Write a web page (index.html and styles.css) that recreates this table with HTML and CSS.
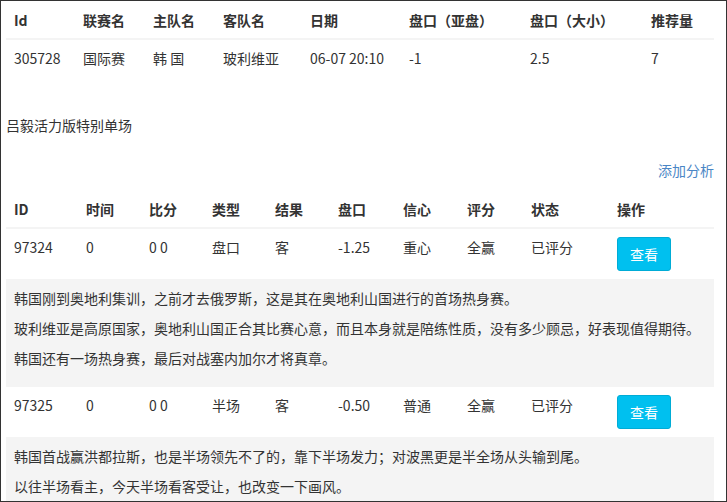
FILE: index.html
```html
<!DOCTYPE html>
<html lang="zh-CN">
<head>
    <meta charset="UTF-8">
    <meta name="viewport" content="width=device-width, initial-scale=1.0">
    <title>单场分析</title>
    <link rel="stylesheet" href="styles.css">
</head>
<body>
    <div class="wrapper">
        <table class="table match-table">
            <colgroup>
                <col style="width: 69px">
                <col style="width: 70px">
                <col style="width: 70px">
                <col style="width: 87px">
                <col style="width: 99px">
                <col style="width: 121px">
                <col style="width: 121px">
                <col>
            </colgroup>
            <thead>
                <tr>
                    <th>Id</th>
                    <th>联赛名</th>
                    <th>主队名</th>
                    <th>客队名</th>
                    <th>日期</th>
                    <th>盘口（亚盘）</th>
                    <th>盘口（大小）</th>
                    <th>推荐量</th>
                </tr>
            </thead>
            <tbody>
                <tr>
                    <td>305728</td>
                    <td>国际赛</td>
                    <td>韩 国</td>
                    <td>玻利维亚</td>
                    <td>06-07 20:10</td>
                    <td>-1</td>
                    <td>2.5</td>
                    <td>7</td>
                </tr>
            </tbody>
        </table>

        <p class="title">吕毅活力版特别单场</p>
        <div class="actions">
            <a href="#" class="add-link">添加分析</a>
        </div>

        <table class="table analysis-table">
            <colgroup>
                <col style="width: 72px">
                <col style="width: 63px">
                <col style="width: 63px">
                <col style="width: 63px">
                <col style="width: 63px">
                <col style="width: 65px">
                <col style="width: 64px">
                <col style="width: 64px">
                <col style="width: 86px">
                <col>
            </colgroup>
            <thead>
                <tr>
                    <th>ID</th>
                    <th>时间</th>
                    <th>比分</th>
                    <th>类型</th>
                    <th>结果</th>
                    <th>盘口</th>
                    <th>信心</th>
                    <th>评分</th>
                    <th>状态</th>
                    <th>操作</th>
                </tr>
            </thead>
            <tbody>
                <tr>
                    <td>97324</td>
                    <td>0</td>
                    <td>0 0</td>
                    <td>盘口</td>
                    <td>客</td>
                    <td>-1.25</td>
                    <td>重心</td>
                    <td>全赢</td>
                    <td>已评分</td>
                    <td><button type="button" class="btn-info">查看</button></td>
                </tr>
                <tr class="note-row">
                    <td colspan="10">
                        <p>韩国刚到奥地利集训，之前才去俄罗斯，这是其在奥地利山国进行的首场热身赛。</p>
                        <p>玻利维亚是高原国家，奥地利山国正合其比赛心意，而且本身就是陪练性质，没有多少顾忌，好表现值得期待。</p>
                        <p>韩国还有一场热身赛，最后对战塞内加尔才将真章。</p>
                    </td>
                </tr>
                <tr>
                    <td>97325</td>
                    <td>0</td>
                    <td>0 0</td>
                    <td>半场</td>
                    <td>客</td>
                    <td>-0.50</td>
                    <td>普通</td>
                    <td>全赢</td>
                    <td>已评分</td>
                    <td><button type="button" class="btn-info">查看</button></td>
                </tr>
                <tr class="note-row">
                    <td colspan="10">
                        <p>韩国首战赢洪都拉斯，也是半场领先不了的，靠下半场发力；对波黑更是半全场从头输到尾。</p>
                        <p>以往半场看主，今天半场看客受让，也改变一下画风。</p>
                    </td>
                </tr>
            </tbody>
        </table>
    </div>
</body>
</html>
```

FILE: styles.css
```css
html, body {
    margin: 0;
    padding: 0;
}
body {
    font-family: "Noto Sans CJK SC", "Open Sans", sans-serif;
    font-size: 14px;
    line-height: 20px;
    color: #333;
    background-color: #fff;
}
.wrapper {
    box-sizing: border-box;
    width: 727px;
    height: 502px;
    overflow: hidden;
    border: 1px solid #333;
    padding: 1px 12px 0 5px;
}
.table {
    width: 100%;
    table-layout: fixed;
    border-collapse: collapse;
    border-spacing: 0;
}
.table th,
.table td {
    padding: 8px;
    text-align: left;
    vertical-align: top;
    white-space: nowrap;
}
.table th {
    font-weight: bold;
    border-bottom: 2px solid #f4f4f4;
}
.table td {
    border-top: 1px solid #f4f4f4;
}
.match-table {
    margin-bottom: 39px;
}
.title {
    margin: 0;
}
.actions {
    margin-top: 25px;
    text-align: right;
}
.add-link {
    color: #4a86c5;
    text-decoration: none;
}
.analysis-table {
    margin-top: 11px;
}
.btn-info {
    font-family: inherit;
    font-size: 14px;
    line-height: 20px;
    padding: 6px 12px;
    color: #fff;
    background-color: #00c0ef;
    border: 1px solid #00acd6;
    border-radius: 3px;
    cursor: pointer;
}
.note-row td {
    background-color: #f4f4f4;
    white-space: normal;
}
.note-row p {
    margin: 0 0 10px;
}
```
